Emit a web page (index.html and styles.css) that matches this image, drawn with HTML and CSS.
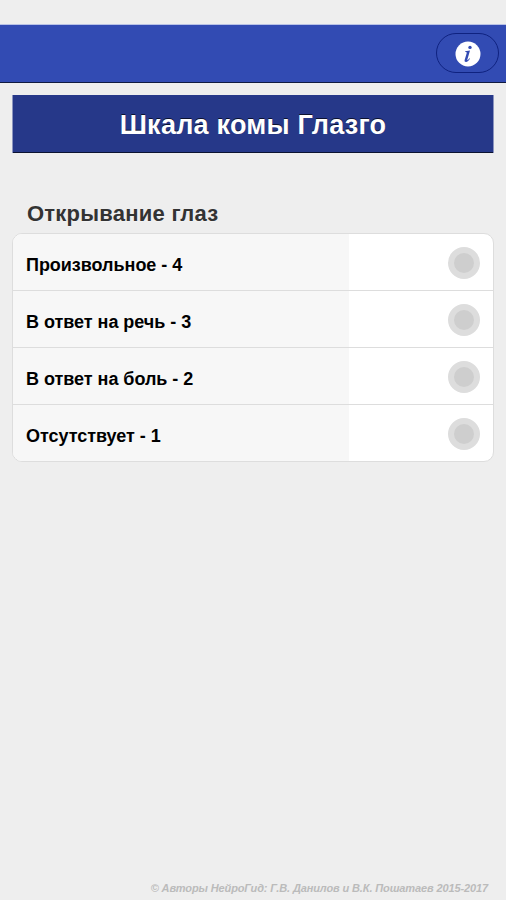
FILE: index.html
```html
<!DOCTYPE html>
<html lang="ru">
<head>
<meta charset="utf-8">
<title>Шкала комы Глазго</title>
<link rel="stylesheet" href="styles.css">
</head>
<body>
<header class="toolbar">
  <button class="info" aria-label="Информация">
    <svg width="26" height="26" viewBox="0 0 26 26"><circle cx="13" cy="13" r="12.5" fill="#fff"/><circle cx="15" cy="6.400" r="1.700" fill="#324bb3"/><path d="M10.200 10.300l4.800-.7-2.700 9.100c-.1.500.1.600.4.400.7-.4 1.200-1.100 1.700-1.900l.6.400c-1.200 2.200-2.600 3.400-4 3.400-1.200 0-1.700-.8-1.300-2.200l1.900-6.400c.3-1.100 0-1.500-1.400-1.500z" fill="#324bb3"/></svg>
  </button>
</header>
<main class="content">
  <h1 class="title">Шкала комы Глазго</h1>
  <h2 class="group-title">Открывание глаз</h2>
  <div class="options">
    <label class="option"><span class="label">Произвольное - 4</span><span class="field"><span class="radio"></span></span></label>
    <label class="option"><span class="label">В ответ на речь - 3</span><span class="field"><span class="radio"></span></span></label>
    <label class="option"><span class="label">В ответ на боль - 2</span><span class="field"><span class="radio"></span></span></label>
    <label class="option"><span class="label">Отсутствует - 1</span><span class="field"><span class="radio"></span></span></label>
  </div>
</main>
<footer class="footer"><span class="credit">© Авторы НейроГид: Г.В. Данилов и В.К. Пошатаев 2015-2017</span></footer>
</body>
</html>
```
FILE: styles.css
```css
* { box-sizing: border-box; }
body {
  margin: 0;
  height: 900px;
  padding-top: 24px;
  display: flex;
  flex-direction: column;
  background: #eee;
  font-family: "Liberation Sans", Arial, sans-serif;
  font-weight: bold;
  overflow: hidden;
}
.toolbar {
  height: 59px;
  padding: 8px 7px 0;
  display: flex;
  justify-content: flex-end;
  align-items: flex-start;
  background: #324bb3;
  border-top: 1px solid #b9c2e6;
  border-bottom: 1px solid #101a40;
}
.info {
  width: 63px;
  height: 40px;
  padding: 1px 0 0;
  display: flex;
  align-items: center;
  justify-content: center;
  background: none;
  border: 1px solid #0f2280;
  border-radius: 20px;
}
.content { flex: 1; padding: 12px 12px 0; }
.title {
  margin: 0;
  height: 58px;
  line-height: 60px;
  text-align: center;
  font-size: 27px;
  letter-spacing: .24px;
  color: #fff;
  background: #263889;
  border: solid #8c95bf;
  border-width: 0 1px;
  box-shadow: inset 0 -1px 0 #0c1230;
  text-shadow: 0 -1px 0 #0c1230;
}
.group-title {
  margin: 48px 0 0 15px;
  font-size: 22px;
  letter-spacing: .24px;
  line-height: 25px;
  height: 32px;
  color: #333;
  text-shadow: 0 1px 0 #f3f3f3;
}
.options {
  border: 1px solid #ddd;
  border-radius: 10px;
  background: #fff;
  overflow: hidden;
}
.option { display: flex; height: 57px; border-bottom: 1px solid #ddd; }
.option:last-child { height: 56px; border-bottom: 0; }
.label {
  width: 336px;
  padding-left: 13px;
  line-height: 62px;
  font-size: 18px;
  letter-spacing: -.03px;
  color: #000;
  background: #f7f7f7;
}
.field { flex: 1; display: flex; justify-content: flex-end; padding: 13px 13px 0 0; }
.radio { width: 32px; height: 32px; border: 6px solid #ddd; border-radius: 50%; background: #cecece; }
.footer {
  height: 18px;
  padding-right: 18px;
  text-align: right;
  font-size: 11px;
  letter-spacing: -.12px;
  font-style: italic;
  color: #bbb;
}
```
